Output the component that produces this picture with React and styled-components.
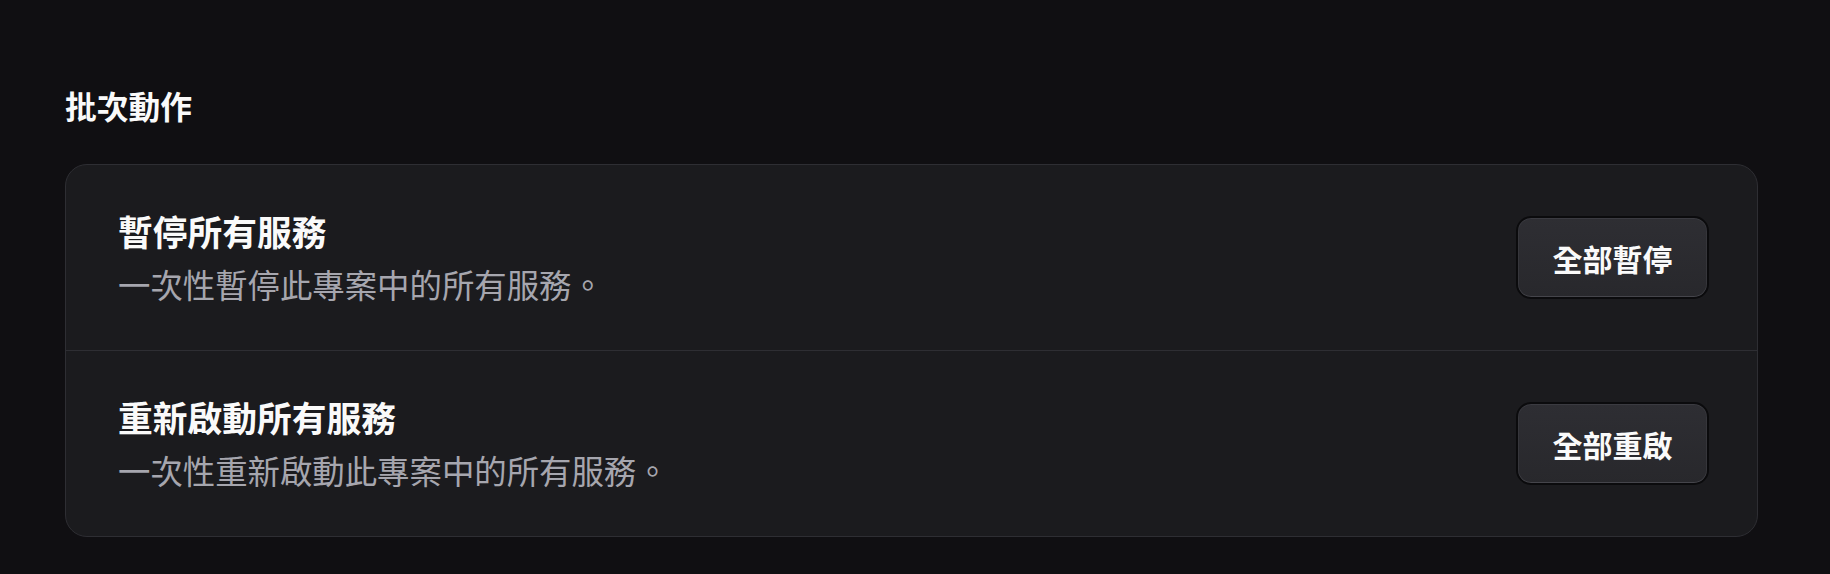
import styled, { createGlobalStyle } from 'styled-components';

const GlobalStyle = createGlobalStyle`
  html, body {
    margin: 0;
    padding: 0;
    background-color: #100f12;
  }
  body {
    font-family: "Noto Sans CJK TC", "Noto Sans", sans-serif;
    -webkit-font-smoothing: antialiased;
  }
`;

const Page = styled.div`
  padding: 83px 72px 38px 65px;
  min-height: 574px;
  box-sizing: border-box;
  background-color: #100f12;
`;

const Heading = styled.h2`
  margin: 0 0 37px;
  font-size: 31.75px;
  line-height: 44px;
  font-weight: 700;
  color: #fafafa;
`;

const Card = styled.div`
  display: flex;
  flex-direction: column;
  background-color: #1b1b1e;
  border: 1px solid #2e2e33;
  border-radius: 22px;
  overflow: hidden;
`;

const Row = styled.div`
  display: flex;
  align-items: center;
  justify-content: space-between;
  padding: 45px 48px 45px 52px;
  border-top: ${({ $first }) => ($first ? 'none' : '1px solid #2e2e33')};
`;

const Info = styled.div`
  display: flex;
  flex-direction: column;
  gap: 11px;
`;

const Title = styled.div`
  font-size: 34.75px;
  line-height: 42px;
  font-weight: 700;
  color: #fafafa;
`;

const Desc = styled.div`
  font-size: 32.4px;
  line-height: 42px;
  color: #a6a6ae;
`;

const ActionButton = styled.button`
  width: 193px;
  height: 83px;
  padding: 0;
  font-family: inherit;
  font-size: 30px;
  font-weight: 700;
  color: #fafafa;
  background: linear-gradient(180deg, #2e2e33 0%, #28282c 100%);
  border: 2px solid #0b0b0d;
  border-radius: 15px;
  box-shadow:
    inset 0 1px 0 #3b3b41,
    inset 0 -1px 0 #45454b,
    inset 1px 0 0 #36363b,
    inset -1px 0 0 #36363b;
  cursor: pointer;
`;

const actions = [
  { title: '暫停所有服務', desc: '一次性暫停此專案中的所有服務。', label: '全部暫停' },
  { title: '重新啟動所有服務', desc: '一次性重新啟動此專案中的所有服務。', label: '全部重啟' },
];

export default function App() {
  return (
    <>
      <GlobalStyle />
      <Page>
        <Heading>批次動作</Heading>
        <Card>
          {actions.map((a, i) => (
            <Row key={a.label} $first={i === 0}>
              <Info>
                <Title>{a.title}</Title>
                <Desc>{a.desc}</Desc>
              </Info>
              <ActionButton>{a.label}</ActionButton>
            </Row>
          ))}
        </Card>
      </Page>
    </>
  );
}
